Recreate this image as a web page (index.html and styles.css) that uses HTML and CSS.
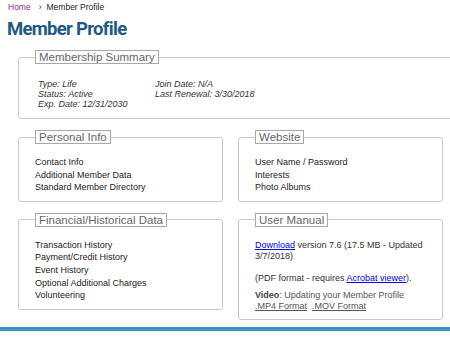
FILE: index.html
```html
<!DOCTYPE html>
<html lang="en">
<head>
  <meta charset="UTF-8">
  <meta name="viewport" content="width=device-width, initial-scale=1.0">
  <title>Member Profile</title>
  <link rel="stylesheet" href="styles.css">
</head>
<body>
  <div class="crumbs"><a href="#" class="crumb-home">Home</a><span class="crumb-sep">›</span>Member Profile</div>
  <h1 class="page-title">Member Profile</h1>

  <div class="content">
    <fieldset class="box box-summary">
      <legend>Membership Summary</legend>
      <div class="summary">
        <div>
          <div>Type: Life</div>
          <div>Status: Active</div>
          <div>Exp. Date: 12/31/2030</div>
        </div>
        <div>
          <div>Join Date: N/A</div>
          <div>Last Renewal: 3/30/2018</div>
        </div>
      </div>
    </fieldset>

    <div class="box-grid">
      <fieldset class="box">
        <legend>Personal Info</legend>
        <ul class="links">
          <li><a href="#">Contact Info</a></li>
          <li><a href="#">Additional Member Data</a></li>
          <li><a href="#">Standard Member Directory</a></li>
        </ul>
      </fieldset>

      <fieldset class="box">
        <legend>Website</legend>
        <ul class="links">
          <li><a href="#">User Name / Password</a></li>
          <li><a href="#">Interests</a></li>
          <li><a href="#">Photo Albums</a></li>
        </ul>
      </fieldset>

      <fieldset class="box">
        <legend>Financial/Historical Data</legend>
        <ul class="links">
          <li><a href="#">Transaction History</a></li>
          <li><a href="#">Payment/Credit History</a></li>
          <li><a href="#">Event History</a></li>
          <li><a href="#">Optional Additional Charges</a></li>
          <li><a href="#">Volunteering</a></li>
        </ul>
      </fieldset>

      <fieldset class="box box-manual">
        <legend>User Manual</legend>
        <p><a href="#" class="blue-link">Download</a> version 7.6 (17.5 MB - Updated 3/7/2018)</p>
        <p>(PDF format - requires <a href="#" class="blue-link">Acrobat viewer</a>).</p>
        <p class="video"><b>Video</b>: Updating your Member Profile<br>
          <a href="#">.MP4 Format</a>&nbsp; <a href="#">.MOV Format</a></p>
      </fieldset>
    </div>
  </div>

  <div class="footer-bar"></div>
</body>
</html>
```

FILE: styles.css
```css
body {
  margin: 0;
  font-family: "Liberation Sans", Arial, sans-serif;
  color: #222;
  overflow: hidden;
}

a {
  color: inherit;
  text-decoration: none;
}

.crumbs {
  padding: 2px 0 0 8px;
  font-size: 8.5px;
  line-height: 11px;
  color: #222;
}

.crumb-home {
  color: #8a2a8c;
}

.crumb-sep {
  margin: 0 5px 0 8px;
}

.page-title {
  margin: 5px 0 0 7px;
  font-family: Roboto, "Liberation Sans", sans-serif;
  font-weight: 700;
  font-size: 18.5px;
  line-height: 22px;
  letter-spacing: -0.7px;
  color: #1e5a84;
}

.content {
  margin: 10px 7px 0 18px;
}

/* fieldset boxes */
.box {
  margin: 0;
  min-width: 0;
  padding: 12px 8px 7px 16px;
  border: 1px solid #c8c8c8;
  border-radius: 3px;
}

.box legend {
  padding: 0 3px;
  border: 1px solid #a8a8a8;
  font-size: 11.5px;
  line-height: 12px;
  color: #666;
}

.box-summary {
  margin-right: -12px;
  padding: 15px 8px 9px 16px;
}

.summary {
  display: grid;
  grid-template-columns: 117px auto;
  padding-left: 3px;
  font-size: 9px;
  line-height: 10px;
  font-style: italic;
  color: #333;
}

.box-grid {
  display: grid;
  grid-template-columns: 205px 205px;
  column-gap: 15px;
  row-gap: 11px;
  align-items: start;
  margin-top: 11px;
}

.links {
  margin: 0;
  padding: 0;
  list-style: none;
  font-size: 9px;
  line-height: 12.6px;
  color: #222;
}

.box-grid > .box:nth-child(-n+2) {
  align-self: stretch;
}

.box-manual {
  padding-top: 13px;
  padding-bottom: 7px;
  font-size: 9px;
  line-height: 11px;
  color: #333;
}

.box-manual p {
  margin: 0 0 11px;
}

.box-manual p.video {
  margin: -5px 0 0;
  color: #555;
}

.video b {
  font-weight: 700;
  color: #444;
}

.video a {
  text-decoration: underline;
}

.blue-link {
  color: #0000ee;
  text-decoration: underline;
}

.footer-bar {
  margin-top: 7px;
  height: 4px;
  background-color: #3994c8;
}
```
